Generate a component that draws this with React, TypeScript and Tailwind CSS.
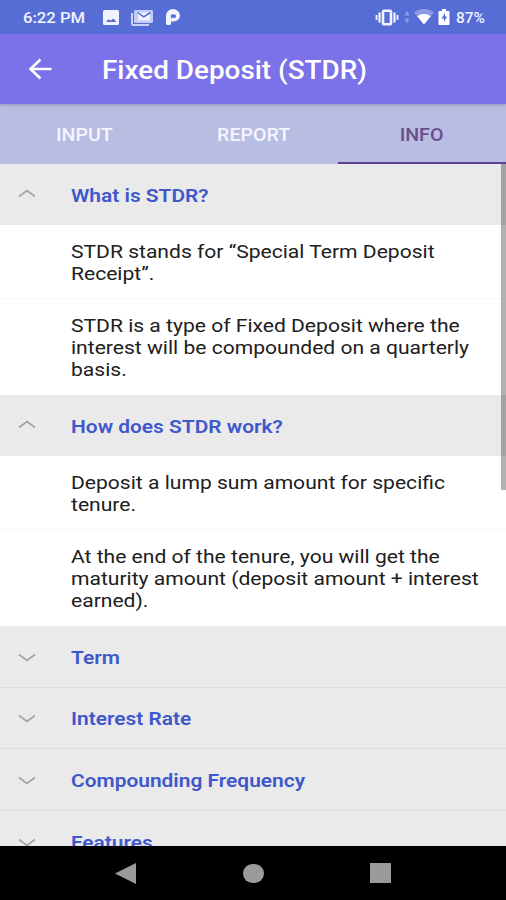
import clsx from 'clsx';

interface Section {
  title: string;
  paragraphs: string[][];
}

const SECTIONS: Section[] = [
  {
    title: 'What is STDR?',
    paragraphs: [
      ['STDR stands for “Special Term Deposit', 'Receipt”.'],
      ['STDR is a type of Fixed Deposit where the', 'interest will be compounded on a quarterly', 'basis.'],
    ],
  },
  {
    title: 'How does STDR work?',
    paragraphs: [
      ['Deposit a lump sum amount for specific', 'tenure.'],
      ['At the end of the tenure, you will get the', 'maturity amount (deposit amount + interest', 'earned).'],
    ],
  },
  { title: 'Term', paragraphs: [] },
  { title: 'Interest Rate', paragraphs: [] },
  { title: 'Compounding Frequency', paragraphs: [] },
  { title: 'Features', paragraphs: [] },
];

const TABS = ['INPUT', 'REPORT', 'INFO'];

const StatusBar = () => (
  <div className="flex h-[34px] shrink-0 items-center bg-[#566dd5] pl-[23px] pr-[21px] text-[#f1f3ff]">
    <span className="mt-[2px] w-[79px] origin-left scale-x-[1.11] text-[15px] font-medium whitespace-nowrap">6:22 PM</span>
    <svg className="h-[17px] w-[18px]" viewBox="0 0 18 17">
      <path
        fillRule="evenodd"
        fill="currentColor"
        d="M2.500 1h13A1.500 1.500 0 0 1 17 2.500v12a1.500 1.500 0 0 1-1.500 1.500h-13A1.500 1.500 0 0 1 1 14.500v-12A1.500 1.500 0 0 1 2.500 1zM4 13h10.500l-3.200-3.500-2.600 2.200-1.800-1.700z"
      />
    </svg>
    <svg className="ml-[10px] h-[17px] w-[24px]" viewBox="0 0 24 17">
      <path d="M2 4v10.500a1.500 1.500 0 0 0 1.500 1.500H19" fill="none" stroke="#c9d1f6" strokeWidth="2" />
      <rect x="4" y="1" width="19" height="13" rx="1.500" fill="#c3ccf5" />
      <path d="M8 3.500h12v8H8z" fill="#eef1ff" />
      <path d="M7.500 3.500l6.300 4.300 6.700-4.300" fill="none" stroke="#566dd5" strokeWidth="1.500" />
    </svg>
    <svg className="ml-[10px] h-[18px] w-[18px]" viewBox="0 0 18 18">
      <path
        fillRule="evenodd"
        fill="currentColor"
        d="M2 7.500a7 6.500 0 0 1 14 0a6.500 6 0 0 1-6.500 6H7v2a1.800 1.800 0 0 1-1.800 1.500h-1.400A1.800 1.800 0 0 1 2 15.500zM7 6.500v4.500l1-1.200h1.500a1.800 1.800 0 1 0 0-3.300z"
      />
    </svg>
    <div className="flex-1" />
    <svg className="h-[17px] w-[24px]" viewBox="0 0 24 17">
      <rect x="8" y="1.800" width="8" height="13.400" rx="1" fill="none" stroke="currentColor" strokeWidth="2.600" />
      <path d="M4.500 3.500v10M19.500 3.500v10" stroke="currentColor" strokeWidth="2.200" />
      <path d="M1.500 6v5M22.500 6v5" stroke="currentColor" strokeWidth="1.800" />
    </svg>
    <svg className="ml-[5px] h-[14px] w-[6px]" viewBox="0 0 6 14">
      <path d="M3 .500l2.500 5h-5zM3 13.500l-2.500-5h5z" fill="#8c9de6" />
    </svg>
    <svg className="ml-[4px] h-[16px] w-[20px]" viewBox="0 0 20 16">
      <path d="M0 3.500a15.500 15.500 0 0 1 20 0L10 15.500z" fill="#8b9ce5" />
      <path d="M3.300 7.300a10.500 10.500 0 0 1 13.400 0L10 15.500z" fill="#fff" />
    </svg>
    <svg className="ml-[4px] h-[16px] w-[12px]" viewBox="0 0 12 16">
      <path d="M4 0h4v2h2.500a1 1 0 0 1 1 1v12a1 1 0 0 1-1 1h-9a1 1 0 0 1-1-1V3a1 1 0 0 1 1-1H4z" fill="#fff" />
      <path d="M7 4L3.500 9.500H6V13l3-5.500H7z" fill="#566dd5" />
    </svg>
    <span className="mt-[2px] ml-[6px] w-[29px] origin-left scale-x-[1.1] text-[14px] font-medium whitespace-nowrap">87%</span>
  </div>
);

const AppBar = () => (
  <div className="relative z-10 flex h-[70px] shrink-0 items-center bg-[#7b71e9] pl-[28px] text-white shadow-[0_1px_3px_rgba(0,0,0,0.2)]">
    <svg className="h-[22px] w-[24px]" viewBox="0 0 24 22" fill="none" stroke="currentColor" strokeWidth="2.600">
      <path d="M23.500 11H3M12.500 1.500L2.500 11l10 9.500" />
    </svg>
    <h1 className="mt-[3px] ml-[50px] origin-left scale-x-[1.115] text-[25px] font-medium whitespace-nowrap">
      Fixed Deposit (STDR)
    </h1>
  </div>
);

const TabBar = () => (
  <div className="grid h-[60px] shrink-0 grid-cols-[169px_169px_168px] bg-[#b8bde2]">
    {TABS.map((tab) => (
      <button
        key={tab}
        className={clsx(
          'border-b-2 pt-[4px] text-[17.500px] font-medium',
          tab === 'INFO' ? 'border-[#613f92] text-[#6b4c8f]' : 'border-transparent text-[#f4f5ff]',
        )}
      >
        <span className="inline-block scale-x-[1.12]">{tab}</span>
      </button>
    ))}
  </div>
);

const SectionHeader = ({ title, expanded }: { title: string; expanded: boolean }) => (
  <div className="flex h-[60.700px] items-center pl-[18px]">
    <svg
      className={clsx('h-[9px] w-[18px]', expanded ? 'mb-[2px] rotate-180' : 'mt-[2px]')}
      viewBox="0 0 18 9"
      fill="none"
      stroke="#a3a3a3"
      strokeWidth="1.700"
    >
      <path d="M1 1.500l8 6 8-6" />
    </svg>
    <h2 className="mt-[3px] ml-[35px] origin-left scale-x-[1.115] text-[18.750px] font-semibold whitespace-nowrap text-[#3f58cb]">
      {title}
    </h2>
  </div>
);

const Paragraph = ({ lines }: { lines: string[] }) => (
  <p className="bg-white pt-[16px] pb-[13.650px] pl-[71px] text-[18.750px] leading-[22px] text-[#202020]">
    {lines.map((line) => (
      <span key={line} className="block w-[380px] origin-left scale-x-[1.124] whitespace-nowrap">
        {line}
      </span>
    ))}
  </p>
);

export default function App() {
  return (
    <div className="flex h-[900px] w-[506px] flex-col overflow-hidden bg-black font-[Roboto,sans-serif]">
      <StatusBar />
      <AppBar />
      <TabBar />
      <div className="relative h-[682px] shrink-0 overflow-hidden bg-[#eaeaea]">
        {SECTIONS.map(({ title, paragraphs }) => (
          <section key={title} className={clsx(paragraphs.length === 0 && 'border-b border-[#dedede]')}>
            <SectionHeader title={title} expanded={paragraphs.length > 0} />
            <div className="divide-y divide-[#f8f8f8]">
              {paragraphs.map((lines) => (
                <Paragraph key={lines[0]} lines={lines} />
              ))}
            </div>
          </section>
        ))}
        {/* scroll thumb */}
        <div className="absolute top-0 right-0 h-[326px] w-[5px] bg-black/30" />
      </div>
      <nav className="flex flex-1 items-center justify-between pl-[115px] pr-[115px]">
        <svg className="h-[21px] w-[21px]" viewBox="0 0 21 21">
          <path d="M0 10.500L21 0v21z" fill="#9b9b9b" />
        </svg>
        <div className="h-[19px] w-[21px] rounded-full bg-[#9b9b9b]" />
        <div className="h-[20px] w-[21px] bg-[#9b9b9b]" />
      </nav>
    </div>
  );
}
